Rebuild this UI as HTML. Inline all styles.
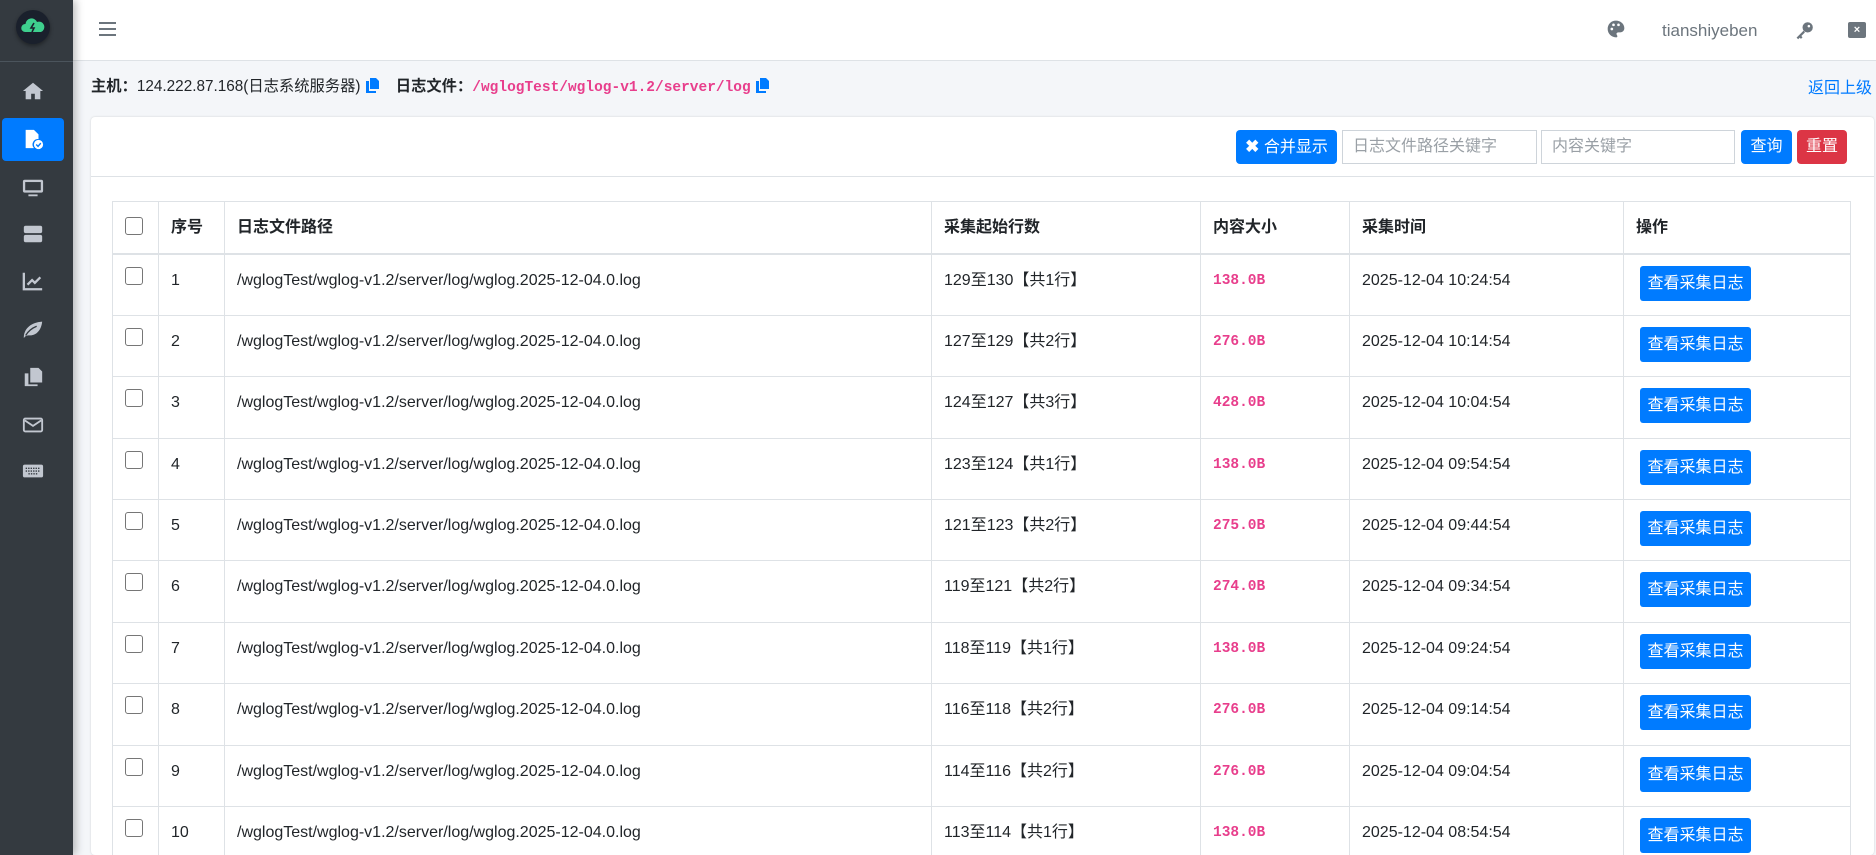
<!DOCTYPE html>
<html style="overflow:hidden"><head><meta charset="utf-8"><style>
*{box-sizing:border-box;margin:0;padding:0}
html,body{width:1876px;height:855px;overflow:hidden}
body{background:#f4f6f9;font-family:"Liberation Sans","Noto Sans CJK SC",sans-serif;font-size:16px;color:#212529;position:relative}
.sb{position:absolute;left:0;top:0;width:73px;height:855px;background:#343a40;box-shadow:3px 0 8px rgba(0,0,0,.25);z-index:2}
.sb .div{position:absolute;left:0;top:61px;width:73px;border-top:1px solid #4b545c}
.logo{position:absolute;left:16px;top:10px;width:34px;height:34px;border-radius:50%;background:#1a202c;box-shadow:0 2px 4px rgba(0,0,0,.4)}
.ico{position:absolute;left:22px;width:22px;height:22px}
.act{position:absolute;left:2px;top:118px;width:62px;height:43px;background:#007bff;border-radius:4px}
.hd{position:absolute;left:73px;top:0;right:0;height:61px;background:#fff;border-bottom:1px solid #dee2e6}
.bc{position:absolute;left:91px;top:78px;font-size:15.3px;white-space:nowrap;line-height:1.2}
.bc b{font-weight:bold}
.mono{font-family:"Liberation Mono",monospace;color:#e83e8c;font-weight:bold;font-size:14.5px}
.back{position:absolute;right:4px;top:74px;color:#007bff;font-size:16px}
.card{position:absolute;left:91px;top:117px;width:1783px;height:738px;background:#fff;border-radius:4px;box-shadow:0 0 2px rgba(0,0,0,.15);overflow:hidden}
.tb{position:absolute;left:0;top:0;right:0;height:60px;border-bottom:1px solid #dee2e6}
.btn{position:absolute;top:13px;height:34px;border-radius:4px;color:#fff;font-size:16px;line-height:34px;text-align:center}
.inp{position:absolute;top:13px;height:34px;border:1px solid #ced4da;color:#9aa0a6;font-size:16px;line-height:32px;padding-left:10px}
table{position:absolute;left:21px;top:84px;width:1739px;border-collapse:collapse;font-size:16px}
td,th{border:1px solid #dee2e6;text-align:left;vertical-align:top;padding:0 12px}
th{height:51px;line-height:51px;border-bottom:2px solid #dee2e6}
td{height:61.4px;padding-top:16px;line-height:19px}
.cb{display:inline-block;width:18px;height:18px;border:1.5px solid #767676;border-radius:3px;margin-top:-4px;vertical-align:top}
th .cb{vertical-align:middle;margin-top:-4px}
.vb{display:inline-block;background:#007bff;color:#fff;border-radius:3px;height:35px;line-height:35px;width:111px;text-align:center;margin-top:-5px;margin-left:4px;vertical-align:top}
td.s{font-family:"Liberation Mono",monospace;color:#e83e8c;font-weight:bold;font-size:14.5px;padding-top:17px}
</style></head><body>
<div class="sb">
 <div class="logo"><svg width="34" height="34" viewBox="0 0 34 34"><path d="M9 22a4 4 0 0 1 .5-8A6 6 0 0 1 21 12a5 5 0 0 1 4 10z" fill="#3ecf8e"/><path d="M18 13l-3 5h3l-2 4" stroke="#1a202c" stroke-width="1.6" fill="none"/></svg></div>
 <div class="div"></div>
 <div class="act"></div>
 <svg class="ico" style="top:80px" viewBox="0 0 24 24"><path d="M12 3L1 12h3v9h6v-6h4v6h6v-9h3z" fill="#c2c7d0"/></svg>
 <svg class="ico" style="top:128px" viewBox="0 0 24 24"><path d="M4 2h9l5 5v5a6 6 0 0 0-5 10H4z" fill="#fff"/><circle cx="18" cy="18" r="5" fill="#fff"/><path d="M15.5 18l2 2 3-3.5" stroke="#007bff" stroke-width="1.5" fill="none"/></svg>
 <svg class="ico" style="top:177px" viewBox="0 0 24 24"><rect x="1" y="3" width="22" height="14" rx="2" fill="#c2c7d0"/><rect x="3.5" y="5.5" width="17" height="9" fill="#343a40"/><rect x="7" y="19" width="10" height="2" fill="#c2c7d0"/></svg>
 <svg class="ico" style="top:223px" viewBox="0 0 24 24"><rect x="2" y="3" width="20" height="8" rx="2" fill="#c2c7d0"/><rect x="2" y="13" width="20" height="8" rx="2" fill="#c2c7d0"/></svg>
 <svg class="ico" style="top:270px" viewBox="0 0 24 24"><path d="M2 3v18h20" stroke="#c2c7d0" stroke-width="2.5" fill="none"/><path d="M6 16l5-5 3 3 6-6" stroke="#c2c7d0" stroke-width="2.5" fill="none"/></svg>
 <svg class="ico" style="top:318px" viewBox="0 0 24 24"><path d="M2 20c1-9 8-15 20-16-1 10-7 15-13 15-3 0-5 0-7 3z" fill="#c2c7d0"/><path d="M4 19c3-5 7-8 12-10" stroke="#343a40" stroke-width="1.5" fill="none"/></svg>
 <svg class="ico" style="top:366px" viewBox="0 0 24 24"><path d="M9 2h9l4 4v12H9z" fill="#c2c7d0"/><path d="M3 8h4v12h10v2H3z" fill="#c2c7d0"/></svg>
 <svg class="ico" style="top:414px" viewBox="0 0 24 24"><rect x="2" y="5" width="20" height="14" rx="1.5" stroke="#c2c7d0" stroke-width="2" fill="none"/><path d="M3 7l9 6 9-6" stroke="#c2c7d0" stroke-width="2" fill="none"/></svg>
 <svg class="ico" style="top:460px" viewBox="0 0 24 24"><rect x="1" y="5" width="22" height="14" rx="2" fill="#c2c7d0"/><path d="M4 9h16M4 12h16M7 15h10" stroke="#343a40" stroke-width="1.5" stroke-dasharray="1.5 1.2"/></svg>
</div>
<div class="hd">
 <svg style="position:absolute;left:26px;top:21px" width="17" height="16" viewBox="0 0 17 16"><path d="M0 2h17M0 8h17M0 14h17" stroke="#6c757d" stroke-width="2"/></svg>
 <svg style="position:absolute;left:1533px;top:19px" width="20" height="20" viewBox="0 0 24 24"><path d="M12 2C6 2 2 6.5 2 12s4.5 10 10 10c2 0 2-1.5 1-3-1-1.5 0-3 2-3h2c3 0 5-2 5-5 0-5-4.5-9-10-9z" fill="#6c757d"/><circle cx="7" cy="12" r="1.6" fill="#fff"/><circle cx="9" cy="7" r="1.6" fill="#fff"/><circle cx="15" cy="7" r="1.6" fill="#fff"/></svg>
 <div style="position:absolute;left:1589px;top:21px;color:#6c757d;font-size:17px">tianshiyeben</div>
 <svg style="position:absolute;left:1722px;top:21px" width="19" height="19" viewBox="0 0 24 24"><circle cx="16" cy="8" r="6.5" fill="#6c757d"/><circle cx="17.5" cy="6.5" r="1.6" fill="#fff"/><path d="M11 12L2 21l2 2 2-2 1.5 1.5 2-2L8 19l4.5-4.5z" fill="#6c757d"/></svg>
 <div style="position:absolute;left:1775px;top:22px;width:18px;height:16px;background:#6c757d;border-radius:2px;color:#fff;font-size:11px;font-weight:bold;text-align:center;line-height:16px">×</div>
</div>
<div class="bc"><b>主机：</b>124.222.87.168(日志系统服务器) <svg width="14" height="15" viewBox="0 0 14 15" style="vertical-align:-2px"><path d="M5 0h6l3 3v8H5z" fill="#007bff"/><path d="M1 3h3v10h7v2H1z" fill="#007bff"/></svg>&nbsp;&nbsp;&nbsp; <b>日志文件：</b><span class="mono">/wglogTest/wglog-v1.2/server/log</span> <svg width="14" height="15" viewBox="0 0 14 15" style="vertical-align:-2px"><path d="M5 0h6l3 3v8H5z" fill="#007bff"/><path d="M1 3h3v10h7v2H1z" fill="#007bff"/></svg></div>
<div class="back">返回上级</div>
<div class="card">
 <div class="tb">
  <div class="btn" style="left:1145px;width:101px;background:#007bff"><span style="font-weight:bold;font-size:17px">✖</span> 合并显示</div>
  <div class="inp" style="left:1251px;width:195px">日志文件路径关键字</div>
  <div class="inp" style="left:1450px;width:194px">内容关键字</div>
  <div class="btn" style="left:1650px;width:51px;background:#007bff">查询</div>
  <div class="btn" style="left:1706px;width:50px;background:#dc3545">重置</div>
 </div>
 <table>
  <tr><th style="width:46px"><span class="cb"></span></th><th style="width:66px">序号</th><th style="width:707px">日志文件路径</th><th style="width:269px">采集起始行数</th><th style="width:149px">内容大小</th><th style="width:274px">采集时间</th><th>操作</th></tr>
  <tr><td><span class="cb"></span></td><td>1</td><td>/wglogTest/wglog-v1.2/server/log/wglog.2025-12-04.0.log</td><td>129至130【共1行】</td><td class="s">138.0B</td><td>2025-12-04 10:24:54</td><td><span class="vb">查看采集日志</span></td></tr>
  <tr><td><span class="cb"></span></td><td>2</td><td>/wglogTest/wglog-v1.2/server/log/wglog.2025-12-04.0.log</td><td>127至129【共2行】</td><td class="s">276.0B</td><td>2025-12-04 10:14:54</td><td><span class="vb">查看采集日志</span></td></tr>
  <tr><td><span class="cb"></span></td><td>3</td><td>/wglogTest/wglog-v1.2/server/log/wglog.2025-12-04.0.log</td><td>124至127【共3行】</td><td class="s">428.0B</td><td>2025-12-04 10:04:54</td><td><span class="vb">查看采集日志</span></td></tr>
  <tr><td><span class="cb"></span></td><td>4</td><td>/wglogTest/wglog-v1.2/server/log/wglog.2025-12-04.0.log</td><td>123至124【共1行】</td><td class="s">138.0B</td><td>2025-12-04 09:54:54</td><td><span class="vb">查看采集日志</span></td></tr>
  <tr><td><span class="cb"></span></td><td>5</td><td>/wglogTest/wglog-v1.2/server/log/wglog.2025-12-04.0.log</td><td>121至123【共2行】</td><td class="s">275.0B</td><td>2025-12-04 09:44:54</td><td><span class="vb">查看采集日志</span></td></tr>
  <tr><td><span class="cb"></span></td><td>6</td><td>/wglogTest/wglog-v1.2/server/log/wglog.2025-12-04.0.log</td><td>119至121【共2行】</td><td class="s">274.0B</td><td>2025-12-04 09:34:54</td><td><span class="vb">查看采集日志</span></td></tr>
  <tr><td><span class="cb"></span></td><td>7</td><td>/wglogTest/wglog-v1.2/server/log/wglog.2025-12-04.0.log</td><td>118至119【共1行】</td><td class="s">138.0B</td><td>2025-12-04 09:24:54</td><td><span class="vb">查看采集日志</span></td></tr>
  <tr><td><span class="cb"></span></td><td>8</td><td>/wglogTest/wglog-v1.2/server/log/wglog.2025-12-04.0.log</td><td>116至118【共2行】</td><td class="s">276.0B</td><td>2025-12-04 09:14:54</td><td><span class="vb">查看采集日志</span></td></tr>
  <tr><td><span class="cb"></span></td><td>9</td><td>/wglogTest/wglog-v1.2/server/log/wglog.2025-12-04.0.log</td><td>114至116【共2行】</td><td class="s">276.0B</td><td>2025-12-04 09:04:54</td><td><span class="vb">查看采集日志</span></td></tr>
  <tr><td><span class="cb"></span></td><td>10</td><td>/wglogTest/wglog-v1.2/server/log/wglog.2025-12-04.0.log</td><td>113至114【共1行】</td><td class="s">138.0B</td><td>2025-12-04 08:54:54</td><td><span class="vb">查看采集日志</span></td></tr>
 </table>
</div>
</body></html>
